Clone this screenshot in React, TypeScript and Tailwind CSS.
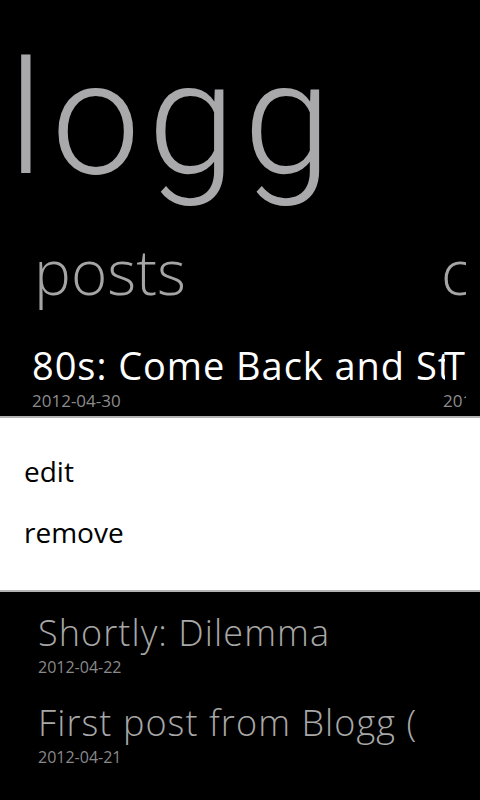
import React from 'react';

const posts = [
  { title: 'Shortly: Dilemma', date: '2012-04-22' },
  { title: 'First post from Blogg (Windows Phone)', date: '2012-04-21' },
];

export default function App() {
  return (
    <div className="w-[480px] h-[800px] bg-black overflow-hidden font-['Open_Sans',sans-serif]">
      <div className="w-[466px] overflow-hidden">
        {/* Panorama title */}
        <h1 className="mt-[40px] pl-[8px] font-['Roboto',sans-serif] text-[158px] leading-none font-light tracking-[0.05em] text-[#a9a9ab] whitespace-nowrap">
          logg
        </h1>

        {/* Panels: header + first (pressed) item */}
        <div className="flex mt-[42px]">
          <div className="w-[445px] shrink-0 overflow-hidden pl-[34px]">
            <h2 className="text-[62px] leading-none font-light text-[#a5a5a5]">posts</h2>
            <div className="mt-[44px] -ml-[2px] whitespace-nowrap">
              <div className="text-[38px] leading-none tracking-[0.025em] text-white">80s: Come Back and Stay</div>
              <div className="mt-[8px] text-[17px] leading-none text-[#8c8c8c]">2012-04-30</div>
            </div>
          </div>
          <div className="shrink-0 whitespace-nowrap">
            <h2 className="-ml-[4px] text-[62px] leading-none font-light text-[#a5a5a5]">comments</h2>
            <div className="mt-[44px]">
              <div className="-ml-[1px] text-[38px] leading-none text-white">Testing comments</div>
              <div className="mt-[8px] -ml-[2px] text-[17px] leading-none text-[#8c8c8c]">2012-04-30</div>
            </div>
          </div>
        </div>
      </div>

      {/* Context menu */}
      <div className="mt-[7px] h-[176px] bg-white border-y-2 border-[#b4b4b4] pl-[24px] pt-[39px]">
        <div className="text-[28px] leading-none text-black">edit</div>
        <div className="mt-[33px] text-[28px] leading-none text-black">remove</div>
      </div>

      {/* Rest of the posts list */}
      <div className="w-[417px] overflow-hidden pl-[38px]">
        {posts.map((p, i) => (
          <div key={i} className={i === 0 ? 'mt-[23px] whitespace-nowrap' : 'mt-[30px] whitespace-nowrap'}>
            <div className="text-[36px] leading-none font-light tracking-[0.03em] text-[#a8a8a8]">{p.title}</div>
            <div className="mt-[8px] text-[16px] leading-none text-[#8a8a8a]">{p.date}</div>
          </div>
        ))}
      </div>
    </div>
  );
}
